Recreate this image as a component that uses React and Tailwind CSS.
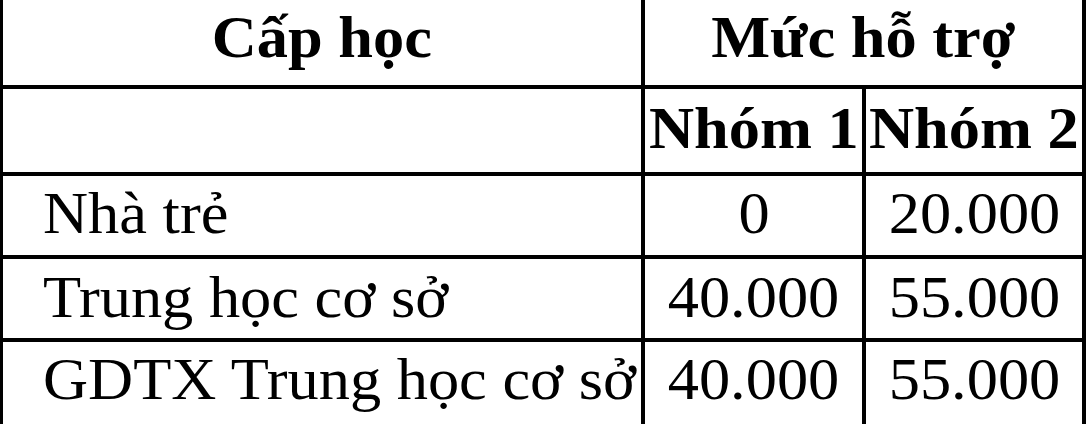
function T({ children, left }) {
  return (
    <span className={"inline-block whitespace-nowrap scale-x-[1.04] " + (left ? "origin-left" : "origin-center")}>
      {children}
    </span>
  );
}

export default function App() {
  const rows = [
    ["Nhà trẻ", "0", "20.000", "pt-[7px]"],
    ["Trung học cơ sở", "40.000", "55.000", "pt-[8px]"],
    ["GDTX Trung học cơ sở", "40.000", "55.000", "pt-[7px]"],
  ];
  return (
    <div className="w-[1088px] h-[424px] bg-white overflow-hidden font-['Liberation_Serif',serif] text-black text-[60px] leading-none">
      <div className="w-[1086px] border-l-[3px] border-r-4 border-black flex flex-col">
        <div className="flex h-[89px] border-b-4 border-black">
          <div className="w-[642px] border-r-4 border-black flex items-start justify-center font-bold pt-[7px]">
            <T>Cấp học</T>
          </div>
          <div className="flex-1 flex items-start justify-center font-bold pt-[7px]">
            <T>Mức hỗ trợ</T>
          </div>
        </div>
        <div className="flex h-[87px] border-b-4 border-black">
          <div className="w-[642px] border-r-4 border-black"></div>
          <div className="w-[221px] border-r-4 border-black flex items-start justify-center font-bold pt-[9px]">
            <T>Nhóm 1</T>
          </div>
          <div className="flex-1 flex items-start justify-center font-bold pt-[9px]">
            <T>Nhóm 2</T>
          </div>
        </div>
        {rows.map(([a, b, c, pt], i) => (
          <div
            key={i}
            className={
              "flex border-black " + (i < 2 ? "border-b-4 h-[83px]" : "h-[90px]")
            }
          >
            <div className={"w-[642px] border-r-4 border-black flex items-start pl-[40px] " + pt}>
              <T left>{a}</T>
            </div>
            <div className={"w-[221px] border-r-4 border-black flex items-start justify-center " + pt}>
              <T>{b}</T>
            </div>
            <div className={"flex-1 flex items-start justify-center " + pt}>
              <T>{c}</T>
            </div>
          </div>
        ))}
      </div>
    </div>
  );
}
